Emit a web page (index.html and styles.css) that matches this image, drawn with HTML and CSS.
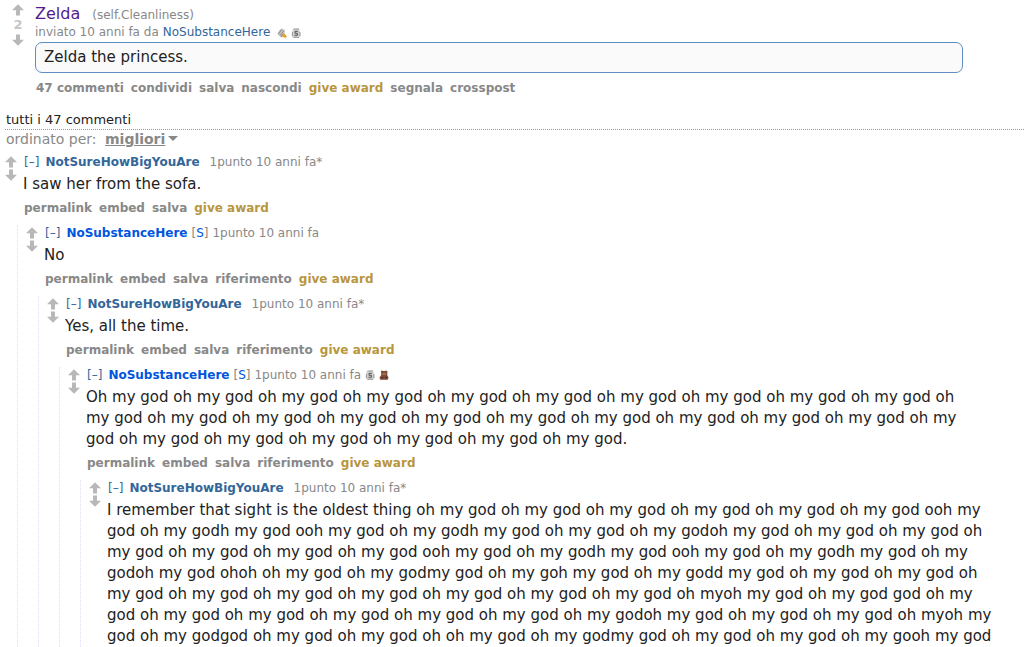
FILE: index.html
```
<!DOCTYPE html>
<html lang="it">
<head>
<meta charset="utf-8">
<title>Zelda</title>
<link rel="stylesheet" href="styles.css">
</head>
<body>
<svg class="defs" aria-hidden="true">
  <symbol id="up" viewBox="0 0 12 12"><path d="M6 0.3 12 6.3H8V11.5H4V6.3H0Z" fill="#b8b8b8"/></symbol>
  <symbol id="down" viewBox="0 0 12 12"><path d="M4 0.5H8V5.7H12L6 11.7 0 5.7H4Z" fill="#b8b8b8"/></symbol>
  <symbol id="silver" viewBox="0 0 10 10"><path d="M2 1 8 .5 9 4 9.5 8 8 9.7H2L.7 8 1 4Z" fill="#cfcfcf"/><path d="M2.5 1H8M1.4 4V8M9 4V8M2.5 9.4H8" stroke="#8c8c8c" stroke-width=".8" fill="none"/><path d="M6.8 3.4H4V5.3H6.4V7.3H3.5" stroke="#4a4a4a" stroke-width=".9" fill="none"/></symbol>
  <symbol id="wing" viewBox="0 0 10 10"><path d="M.5 6 2.5 2 5 .5 8 2.5 7 8 4 9.5Z" fill="#c6c3bd"/><path d="M1.2 6 5 1.2M3 7.5 6.8 2.8M4 9 6 6" stroke="#7d7d7d" stroke-width=".8"/><path d="M6.5 4.8 10 8.4 8.2 10 4.9 8.2Z" fill="#e8a02d"/></symbol>
  <symbol id="bear" viewBox="0 0 10 10"><path d="M2 .7H4L5 1.3 7 .5 8.5 1.5 8.2 5 9.5 7.5 8.8 9.8H1.2L.5 7.5 2.3 5Z" fill="#7b4a35"/><path d="M3.5 3.2H6.8V4.8H3.5Z" fill="#c47748"/><path d="M2.5 7.5H4.2M6.2 7.5H8" stroke="#452a28"/></symbol>
</svg>
<article class="post">
  <div class="votes">
    <button class="arrow" aria-label="vota su"><svg><use href="#up"/></svg></button>
    <span class="score">2</span>
    <button class="arrow" aria-label="vota giù"><svg><use href="#down"/></svg></button>
  </div>
  <div class="post-body">
    <h1 class="title"><a class="visited" href="#">Zelda</a> <span class="domain">(<a href="#">self.Cleanliness</a>)</span></h1>
    <p class="tagline">inviato 10 anni fa da <a class="user" href="#">NoSubstanceHere</a><span class="awards post-awards"><svg><use href="#wing"/></svg><svg><use href="#silver"/></svg></span></p>
    <div class="selftext">Zelda the princess.</div>
    <nav class="actions"><a href="#">47 commenti</a><a href="#">condividi</a><a href="#">salva</a><a href="#">nascondi</a><a class="gold" href="#">give award</a><a href="#">segnala</a><a href="#">crosspost</a></nav>
  </div>
</article>
<main class="comments">
  <h2 class="all">tutti i 47 commenti</h2>
  <div class="sort">ordinato per: <button class="sort-by">migliori</button></div>

  <article class="comment">
    <div class="row">
      <div class="votes"><button class="arrow" aria-label="vota su"><svg><use href="#up"/></svg></button><button class="arrow" aria-label="vota giù"><svg><use href="#down"/></svg></button></div>
      <div class="entry">
        <p class="head"><a class="fold" href="#">[–]</a><a class="author" href="#">NotSureHowBigYouAre</a><span class="info spaced">1punto 10 anni fa*</span></p>
        <p class="text">I saw her from the sofa.</p>
        <nav class="actions"><a href="#">permalink</a><a href="#">embed</a><a href="#">salva</a><a class="gold" href="#">give award</a></nav>
      </div>
    </div>
    <div class="child">
    <article class="comment">
      <div class="row">
        <div class="votes"><button class="arrow" aria-label="vota su"><svg><use href="#up"/></svg></button><button class="arrow" aria-label="vota giù"><svg><use href="#down"/></svg></button></div>
        <div class="entry">
          <p class="head"><a class="fold" href="#">[–]</a><a class="author op" href="#">NoSubstanceHere</a><span class="info">[<a class="submitter" href="#">S</a>]</span><span class="info">1punto 10 anni fa</span></p>
          <p class="text">No</p>
          <nav class="actions"><a href="#">permalink</a><a href="#">embed</a><a href="#">salva</a><a href="#">riferimento</a><a class="gold" href="#">give award</a></nav>
        </div>
      </div>
      <div class="child">
      <article class="comment">
        <div class="row">
          <div class="votes"><button class="arrow" aria-label="vota su"><svg><use href="#up"/></svg></button><button class="arrow" aria-label="vota giù"><svg><use href="#down"/></svg></button></div>
          <div class="entry">
            <p class="head"><a class="fold" href="#">[–]</a><a class="author" href="#">NotSureHowBigYouAre</a><span class="info spaced">1punto 10 anni fa*</span></p>
            <p class="text">Yes, all the time.</p>
            <nav class="actions"><a href="#">permalink</a><a href="#">embed</a><a href="#">salva</a><a href="#">riferimento</a><a class="gold" href="#">give award</a></nav>
          </div>
        </div>
        <div class="child">
        <article class="comment">
          <div class="row">
            <div class="votes"><button class="arrow" aria-label="vota su"><svg><use href="#up"/></svg></button><button class="arrow" aria-label="vota giù"><svg><use href="#down"/></svg></button></div>
            <div class="entry">
              <p class="head"><a class="fold" href="#">[–]</a><a class="author op" href="#">NoSubstanceHere</a><span class="info">[<a class="submitter" href="#">S</a>]</span><span class="info">1punto 10 anni fa</span><span class="awards"><svg><use href="#silver"/></svg><svg><use href="#bear"/></svg></span></p>
              <p class="text">Oh my god oh my god oh my god oh my god oh my god oh my god oh my god oh my god oh my god oh my god oh<br>my god oh my god oh my god oh my god oh my god oh my god oh my god oh my god oh my god oh my god oh my<br>god oh my god oh my god oh my god oh my god oh my god oh my god.</p>
              <nav class="actions"><a href="#">permalink</a><a href="#">embed</a><a href="#">salva</a><a href="#">riferimento</a><a class="gold" href="#">give award</a></nav>
            </div>
          </div>
          <div class="child">
          <article class="comment">
            <div class="row">
              <div class="votes"><button class="arrow" aria-label="vota su"><svg><use href="#up"/></svg></button><button class="arrow" aria-label="vota giù"><svg><use href="#down"/></svg></button></div>
              <div class="entry">
                <p class="head"><a class="fold" href="#">[–]</a><a class="author" href="#">NotSureHowBigYouAre</a><span class="info spaced">1punto 10 anni fa*</span></p>
                <p class="text">I remember that sight is the oldest thing oh my god oh my god oh my god oh my god oh my god oh my god ooh my<br>god oh my godh my god ooh my god oh my godh my god oh my god oh my godoh my god oh my god oh my god oh<br>my god oh my god oh my god oh my god ooh my god oh my godh my god ooh my god oh my godh my god oh my<br>godoh my god ohoh oh my god oh my godmy god oh my goh my god oh my godd my god oh my god oh my god oh<br>my god oh my god oh my god oh my god oh my god oh my god oh my god oh myoh my god oh my god god oh my<br>god oh my god oh my god oh my god oh my god oh my god oh my godoh my god oh my god oh my god oh myoh my<br>god oh my godgod oh my god oh my god oh oh my god oh my godmy god oh my god oh my god oh my gooh my god</p>
              </div>
            </div>
          </article>
          </div>
        </article>
        </div>
      </article>
      </div>
    </article>
    </div>
  </article>
</main>
</body>
</html>
```
FILE: styles.css
```
* { box-sizing: border-box; }
body {
  margin: 0;
  background: #fff;
  color: #222;
  font-family: Verdana, "DejaVu Sans", sans-serif;
  font-size: 13px;
  overflow: hidden;
}
p, h1, h2 { margin: 0; font-weight: normal; }
a { color: inherit; text-decoration: none; }
button { font: inherit; color: inherit; border: 0; padding: 0; background: none; }
.defs { display: none; }
.arrow, .arrow svg { display: block; width: 12px; height: 12px; }
.post { display: flex; gap: 11px; padding: 4px 0 0 12px; }
.score { display: block; line-height: 18px; text-align: center; font-weight: bold; color: #c6c6c6; }
.post-body { flex: 1; }
.title { display: flex; gap: 12px; align-items: baseline; font-size: 16px; line-height: 20px; }
.visited { color: #551a8b; }
.domain { font-size: 12px; color: #888; }
.tagline { display: flex; align-items: center; gap: 4px; font-size: 12px; line-height: 15px; color: #888; }
.user { color: #369; }
.awards { display: flex; gap: 4px; }
.awards svg { width: 10px; height: 10px; }
.post-awards { margin-left: 3px; }
.selftext {
  margin: 2px 61px 7px 0;
  padding: 4px 8px;
  font-size: 15px;
  line-height: 21px;
  background: #fafafa;
  border: 1px solid #5f8fc0;
  border-radius: 7px;
}
.actions { display: flex; gap: 7px; padding-left: 1px; font-size: 12px; line-height: 16px; font-weight: bold; color: #888; }
.actions .gold { color: #b8963e; }
.comments { padding-left: 5px; }
.all { margin-top: 15px; padding-left: 1px; font-size: 13px; line-height: 18px; border-bottom: 1px dotted #999; }
.sort { padding-left: 1px; font-size: 14px; line-height: 18px; color: #888; }
.sort-by { margin-left: 4px; font-weight: bold; text-decoration: underline; }
.sort-by::after {
  content: "";
  display: inline-block;
  margin-left: 3px;
  vertical-align: 3px;
  border: 5px solid transparent;
  border-top-color: #888;
  border-bottom: 0;
}
.sort + .comment { margin-top: 6px; }
.row { display: flex; gap: 6px; }
.row .votes { padding-top: 2px; }
.row .arrow + .arrow { margin-top: 1px; }
.entry { flex: 1; white-space: nowrap; }
.head { display: flex; align-items: center; gap: 4px; padding-left: 1px; font-size: 12px; line-height: 16px; }
.fold { margin-right: 2px; color: #369; }
.author { font-weight: bold; color: #369; }
.author.op { color: #0055df; }
.info { color: #888; }
.spaced { margin-left: 6px; }
.submitter { color: #0055df; }
.text { margin: 4px 0; font-size: 15px; line-height: 21px; }
.entry .actions { padding-top: 1px; }
.child { margin: 9px 0 0 12px; padding-left: 8px; border-left: 1px dotted #ddf; }
```
